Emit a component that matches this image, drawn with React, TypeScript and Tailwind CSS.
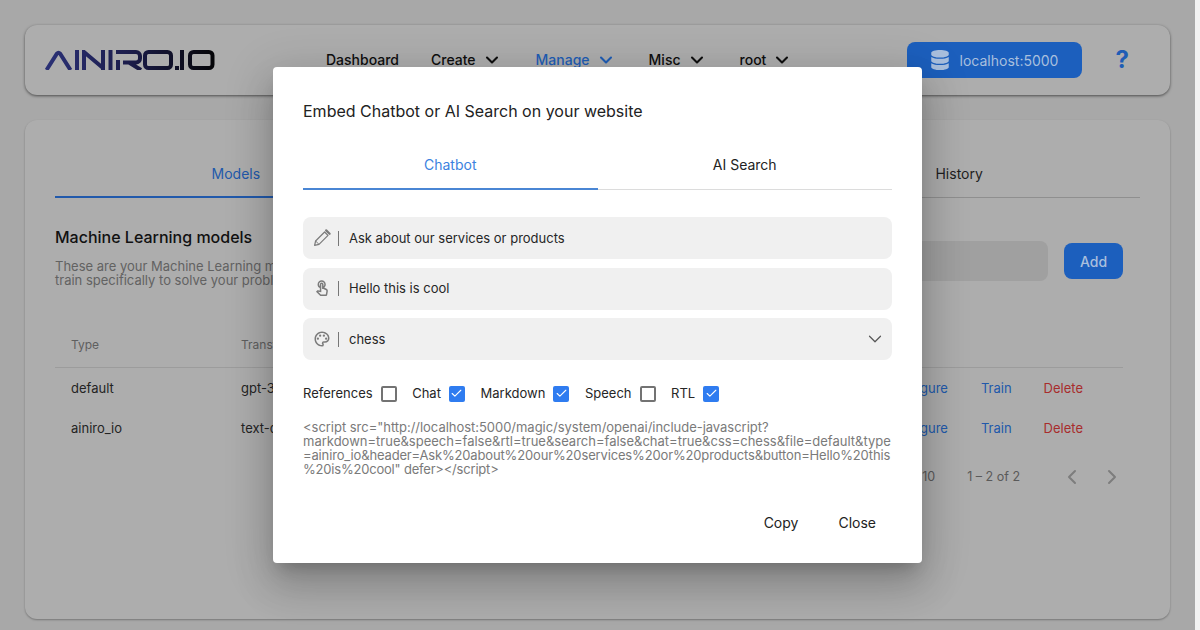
import React from "react";
import { ChevronDown, ChevronLeft, ChevronRight, Check } from "lucide-react";
import { FaDatabase } from "react-icons/fa";
import { MdOutlineTouchApp, MdOutlinePalette } from "react-icons/md";

function Logo() {
  return (
    <svg width="170" height="20" viewBox="0 0 170 20" fill="none" aria-label="AINIRO.IO">
      <defs>
        <linearGradient id="lg" x1="0" y1="0" x2="170" y2="0" gradientUnits="userSpaceOnUse">
          <stop offset="0" stopColor="#2b3176" />
          <stop offset="0.5" stopColor="#1b1c4a" />
          <stop offset="1" stopColor="#050507" />
        </linearGradient>
      </defs>
      <g stroke="url(#lg)" strokeWidth="4">
        <path d="M1.5 20 L12 3.5 Q13.5 1.8 15 3.5 L25.5 20" />
        <path d="M32 0V20" />
        <path d="M39 20V2 L58 18 M58 20V0" />
        <path d="M65.5 0V20" />
        <path d="M71 2H91a4 4 0 0 1 4 4v2.5a4 4 0 0 1-4 4H78 M73 10V20 M84 12.5 L96 20" />
        <rect x="100" y="2" width="26" height="16" rx="3.5" />
        <path d="M130 18H134" />
        <path d="M137 0V20" />
        <rect x="145" y="2" width="22.5" height="16" rx="3.5" />
      </g>
    </svg>
  );
}

function Pencil() {
  return (
    <svg width="18" height="18" viewBox="0 0 18 18" fill="none" stroke="currentColor">
      <path d="M1.6 16.4 L2.6 12 L11.6 3 L15 6.4 L6 15.4 Z" strokeWidth="1.2" strokeLinejoin="round" />
      <path d="M2.6 12 L6 15.4" strokeWidth="1" />
      <path d="M13.2 1.4 L16.6 4.8" strokeWidth="2.2" strokeLinecap="round" />
    </svg>
  );
}

function NavItem({ label, blue, chevron = true, mr }: { label: string; blue?: boolean; chevron?: boolean; mr: string }) {
  return (
    <div className={`flex items-center gap-[6px] text-[14px] font-medium ${blue ? "text-[#1f5db5]" : "text-[#0f0f0f]"} ${mr}`}>
      <span>{label}</span>
      {chevron && <ChevronDown size={20} strokeWidth={2.5} />}
    </div>
  );
}

function Field({ icon, children, chevron }: { icon: React.ReactNode; children: React.ReactNode; chevron?: boolean }) {
  return (
    <div className="flex h-[42px] items-center rounded-[8px] bg-[#f0f0f0] pl-[10px] pr-[6px] text-[13px] text-[#262626]">
      <span className="flex w-[18px] justify-center text-[#7b7b7b]">{icon}</span>
      <span className="ml-[7px] mr-[10px] h-[15px] w-px bg-[#777777]" />
      <span className="flex-1 pt-px">{children}</span>
      {chevron && <ChevronDown size={22} strokeWidth={1.3} className="text-[#555555]" />}
    </div>
  );
}

function Opt({ label, checked, mr }: { label: string; checked?: boolean; mr: string }) {
  return (
    <div className={`flex items-center gap-[8px] ${mr}`}>
      <span>{label}</span>
      {checked ? (
        <span className="flex h-[16px] w-[16px] items-center justify-center rounded-[2px] bg-[#2f7cf0]">
          <Check size={13} strokeWidth={2} className="text-white" />
        </span>
      ) : (
        <span className="h-[16px] w-[16px] rounded-[2px] border-2 border-[#737373]" />
      )}
    </div>
  );
}

function Row({ type, model }: { type: string; model: string }) {
  return (
    <div className="flex h-[40px] items-center pl-[16px] pt-px text-[13px] text-[#242424]">
      <span className="w-[170px]">{type}</span>
      <span className="flex-1">{model}</span>
      <span className="mr-[33px] text-[#2159ab]">Configure</span>
      <span className="mr-[32px] text-[#2159ab]">Train</span>
      <span className="mr-[40px] text-[#a82c2c]">Delete</span>
    </div>
  );
}

export default function App() {
  return (
    <div className="relative flex h-[630px] w-[1200px] overflow-hidden font-['Inter',sans-serif]">
      <div className="h-full flex-1 bg-[#a8a8a8] px-[25px] pt-[25px]">
        <div className="flex h-[70px] w-[1145px] items-center rounded-[12px] bg-[#adadad] pl-[20px] pr-[41px] shadow-[0_1px_3px_rgba(0,0,0,0.55)]">
          <Logo />
          <nav className="ml-[111px] flex flex-1 items-center pb-px">
            <NavItem label="Dashboard" chevron={false} mr="mr-[32px]" />
            <NavItem label="Create" mr="mr-[34px]" />
            <NavItem label="Manage" blue mr="mr-[33px]" />
            <NavItem label="Misc" mr="mr-[33px]" />
            <NavItem label="root" mr="" />
          </nav>
          <div className="flex h-[36px] w-[175px] items-center rounded-[8px] bg-[#1c5fbd] pl-[23px] text-[14px] text-[#a9bfdd]">
            <FaDatabase size={20} className="text-[#a9bfdd]" />
            <span className="ml-[10px]">localhost:5000</span>
          </div>
          <span className="ml-[34px] text-[24px] font-bold leading-none text-[#1f5db5]">?</span>
        </div>

        <div className="mt-[25px] h-[499px] w-[1145px] rounded-[12px] bg-[#adadad] pl-[30px] pr-[30px] pt-[30px] shadow-[0_1px_2px_rgba(0,0,0,0.3)]">
          <div className="grid grid-cols-3 border-b border-[#8f8f8f] text-center text-[14px] text-[#1f1f1f]">
            <div className="-mb-px h-[48px] border-b-2 border-[#2159ab] pt-[13px] text-[#2159ab]">Models</div>
            <div className="pt-[13px]">Chat</div>
            <div className="pt-[13px]">History</div>
          </div>

          <div className="flex pt-[29px]">
            <div className="w-[600px]">
              <h2 className="text-[16px] font-medium leading-[20px] text-[#111111]">Machine Learning models</h2>
              <p className="mt-[12px] text-[13px] leading-[14px] text-[#626262]">
                These are your Machine Learning models that you can
                <br />
                train specifically to solve your problems and answer questions
              </p>
            </div>
            <div className="ml-[60px] mt-[14px] flex h-[40px] flex-1 items-center pr-[17px]">
              <div className="h-[40px] flex-1 rounded-[8px] bg-[#a0a0a0]" />
              <div className="ml-[16px] flex h-[36px] w-[59px] items-center justify-center rounded-[8px] bg-[#1c5fbd] text-[14px] font-medium text-[#a9bfdd]">Add</div>
            </div>
          </div>

          <div className="mr-[17px] mt-[36px]">
            <div className="flex h-[45px] items-center border-b border-[#9c9c9c] pl-[16px] text-[12px] text-[#5f5f5f]">
              <span className="w-[170px]">Type</span>
              <span>Transformer</span>
            </div>
            <Row type="default" model="gpt-3.5-turbo" />
            <Row type="ainiro_io" model="text-davinci" />
            <div className="mt-[9px] flex h-[40px] items-center justify-end text-[12.5px] text-[#5a5a5a]">
              <span className="mr-[32px]">10</span>
              <span className="mr-[40px]">1 – 2 of 2</span>
              <ChevronLeft size={24} strokeWidth={2} className="mr-[16px] text-[#7d7d7d]" />
              <ChevronRight size={24} strokeWidth={2} className="-mr-px text-[#7d7d7d]" />
            </div>
          </div>
        </div>
      </div>
      <div className="h-full w-[5px] bg-[#f2f2f2]" />

      <div className="absolute left-[273px] top-[67px] h-[496px] w-[649px] rounded-[4px] bg-white px-[30px] pt-[30px] shadow-[0_11px_15px_-7px_rgba(0,0,0,0.2),0_24px_38px_3px_rgba(0,0,0,0.14),0_9px_46px_8px_rgba(0,0,0,0.12)]">
        <h1 className="text-[16px] leading-[28px] text-[#222222]">Embed Chatbot or AI Search on your website</h1>

        <div className="mt-[16px] grid grid-cols-2 border-b border-[#dcdcdc] text-center text-[14px] text-[#222222]">
          <div className="-mb-px h-[49px] border-b-2 border-[#4a86d4] pt-[13px] text-[#3b82e0]">Chatbot</div>
          <div className="pt-[13px]">AI Search</div>
        </div>

        <div className="mt-[27px] flex flex-col gap-[8.5px]">
          <Field icon={<Pencil />}>Ask about our services or products</Field>
          <Field icon={<MdOutlineTouchApp size={21} />}>Hello this is cool</Field>
          <Field icon={<MdOutlinePalette size={20} />} chevron>chess</Field>
        </div>

        <div className="mt-[24px] flex items-center text-[13px] text-[#262626]">
          <Opt label="References" mr="mr-[15.6px]" />
          <Opt label="Chat" checked mr="mr-[15.6px]" />
          <Opt label="Markdown" checked mr="mr-[15.6px]" />
          <Opt label="Speech" mr="mr-[15.6px]" />
          <Opt label="RTL" checked mr="" />
        </div>

        <div className="mt-[16px] whitespace-nowrap text-[13px] leading-[14px] text-[#7a7a7a]">
          <div className="tracking-[-0.03px]">&lt;script src="http://localhost:5000/magic/system/openai/include-javascript?</div>
          <div>markdown=true&amp;speech=false&amp;rtl=true&amp;search=false&amp;chat=true&amp;css=chess&amp;file=default&amp;type</div>
          <div className="tracking-[-0.15px]">=ainiro_io&amp;header=Ask%20about%20our%20services%20or%20products&amp;button=Hello%20this</div>
          <div className="tracking-[-0.2px]">%20is%20cool" defer&gt;&lt;/script&gt;</div>
        </div>

        <div className="mt-[36px] flex justify-end pr-[16px] text-[14px] text-[#222222]">
          <span className="mr-[40px]">Copy</span>
          <span>Close</span>
        </div>
      </div>
    </div>
  );
}
